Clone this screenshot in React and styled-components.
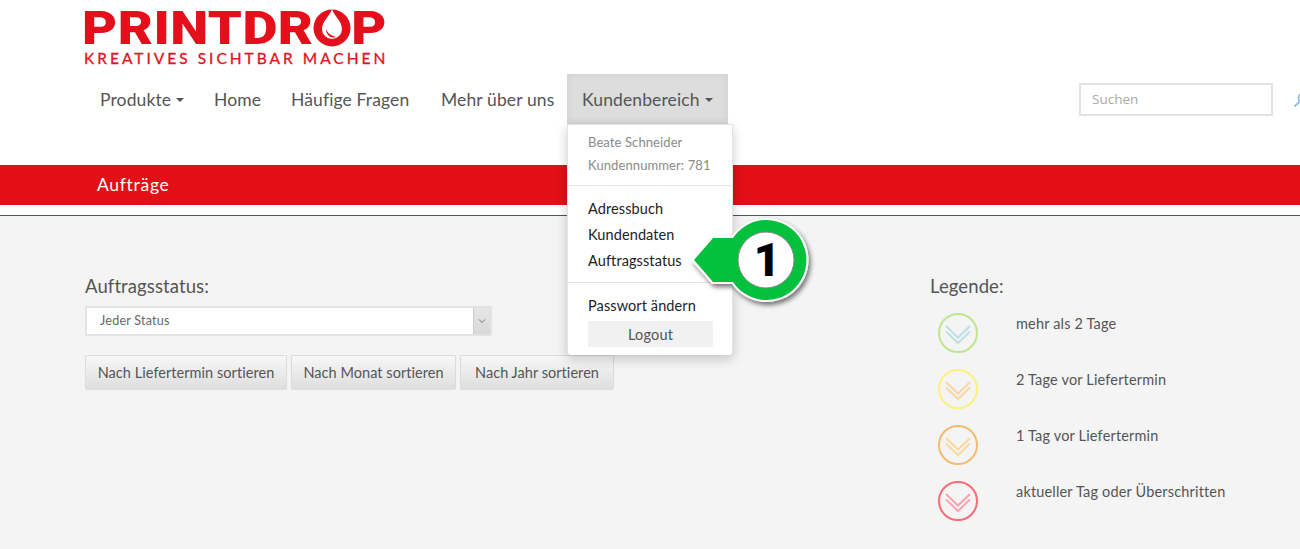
import React from 'react';
import styled, {createGlobalStyle} from 'styled-components';

const GlobalStyle = createGlobalStyle`
  html, body {
    margin: 0;
    padding: 0;
    background: #f4f4f4;
    overflow: hidden;
  }
  body {
    font-family: "Lato", "Open Sans", sans-serif;
    color: #555;
  }
`;

const Page = styled.div`
  position: relative;
  width: 1300px;
  height: 549px;
  overflow: hidden;
`;

const Header = styled.header`
  background: #fff;
  height: 165px;
  box-sizing: border-box;
  padding-top: 9px;
`;

const Logo = styled.div`
  position: relative;
  width: 302px;
  height: 65px;
  margin-left: 84px;
`;

const LogoName = styled.div`
  font-family: "Roboto", "Liberation Sans", sans-serif;
  font-weight: 900;
  font-size: 47px;
  line-height: 38px;
  height: 38px;
  margin-left: -2px;
  color: #e30f1b;
  letter-spacing: 0.4px;
  white-space: nowrap;
  transform-origin: left center;
  transform: scaleX(1.15);
`;

const LogoSlogan = styled.div`
  font-family: "Lato", sans-serif;
  font-weight: 400;
  font-size: 15.5px;
  line-height: 16px;
  margin-top: 3px;
  color: #e30f1b;
  letter-spacing: 3px;
  white-space: nowrap;
  -webkit-text-stroke: 0.3px #e30f1b;
`;

const LogoDrop = styled.svg`
  position: absolute;
  left: 229px;
  top: 0;
`;

const NavRow = styled.div`
  display: flex;
  align-items: flex-start;
  justify-content: space-between;
  padding-left: 85px;
`;

const Nav = styled.nav`
  display: flex;
`;

const NavItem = styled.div`
  position: relative;
  display: flex;
  align-items: center;
  gap: 5px;
  box-sizing: border-box;
  width: ${props => props.$width}px;
  height: 50px;
  padding: 0 15px;
  font-size: 17.5px;
  letter-spacing: 0.12px;
  color: #555;
  white-space: nowrap;
  background: ${props => props.$active ? '#ddd' : 'transparent'};
  box-shadow: ${props => props.$active ? 'inset 0 0 8px rgba(0,0,0,0.06)' : 'none'};
`;

const Caret = styled.span`
  width: 0;
  height: 0;
  border-top: 4px solid #555;
  border-left: 4px solid transparent;
  border-right: 4px solid transparent;
  margin-top: 2px;
`;

const Dropdown = styled.div`
  position: absolute;
  top: 50px;
  left: 0;
  width: 166px;
  height: 231px;
  box-sizing: border-box;
  background: #fff;
  border-radius: 0 0 4px 4px;
  box-shadow: 0 4px 12px rgba(0,0,0,0.2);
  border: 1px solid #e4e4e4;
  border-bottom: 0;
  padding: 6px 0 0 20px;
  z-index: 5;
`;

const InfoLine = styled.div`
  font-size: 13px;
  line-height: 23px;
  letter-spacing: 0.1px;
  color: #8a8a8a;
`;

const Divider = styled.div`
  height: 1px;
  background: #e5e5e5;
  margin: 8px 0 10px -20px;
`;

const MenuLink = styled.div`
  font-size: 14.5px;
  line-height: 26px;
  letter-spacing: 0.1px;
  color: #222;
`;

const LogoutButton = styled.div`
  width: 125px;
  height: 26px;
  margin-top: 2px;
  background: #f1f1f1;
  border-radius: 1px;
  font-size: 14.5px;
  line-height: 27px;
  letter-spacing: 0.2px;
  text-align: center;
  color: #555;
`;

const SearchBox = styled.div`
  display: flex;
  align-items: center;
  gap: 20px;
  margin-top: 9px;
  flex-shrink: 0;
  width: 221px;
`;

const SearchInput = styled.div`
  box-sizing: border-box;
  width: 194px;
  height: 33px;
  flex-shrink: 0;
  border: 2px solid #e2e2e2;
  background: #fff;
  padding-left: 11px;
  font-family: "Open Sans", sans-serif;
  font-size: 13.5px;
  line-height: 29px;
  color: #aaa;
`;

const RedBar = styled.div`
  height: 40px;
  background: #e30f17;
  padding-left: 97px;
  font-size: 17.5px;
  letter-spacing: 0.7px;
  line-height: 40px;
  color: #fff;
`;

const WhiteStrip = styled.div`
  height: 10px;
  background: #fff;
  border-bottom: 1px solid #4a5568;
`;

const Content = styled.main`
  display: grid;
  grid-template-columns: 845px 1fr;
  padding: 59px 0 0 85px;
  background: #f4f4f4;
`;

const Heading = styled.h2`
  margin: 0;
  font-size: 18.5px;
  font-weight: 400;
  line-height: 22px;
  letter-spacing: 0.1px;
  color: #555;
`;

const SelectBox = styled.div`
  display: flex;
  box-sizing: border-box;
  width: 407px;
  height: 30px;
  margin-top: 9px;
  background: #fff;
  border: 2px solid #e3e3e3;
  font-size: 12.5px;
  line-height: 26px;
  letter-spacing: 0.25px;
  color: #666;
`;

const SelectValue = styled.div`
  flex: 1;
  padding-left: 13px;
`;

const SelectArrow = styled.div`
  display: flex;
  align-items: center;
  justify-content: center;
  width: 16px;
  background: linear-gradient(#e6e6e6, #d8d8d8);
  border-left: 1px solid #ccc;
`;

const ButtonRow = styled.div`
  display: flex;
  gap: 4px;
  margin-top: 19px;
`;

const SortButton = styled.button`
  box-sizing: border-box;
  height: 34px;
  width: ${props => props.$width}px;
  padding: 0;
  font-family: inherit;
  font-size: 14.5px;
  letter-spacing: 0.05px;
  color: #555;
  background: linear-gradient(#f7f7f7, #dfdfdf);
  border: 1px solid #dcdcdc;
  border-radius: 1px;
  box-shadow: 0 1px 1px rgba(0,0,0,0.08);
`;

const LegendColumn = styled.section`
  display: flex;
  flex-direction: column;
`;

const LegendList = styled.div`
  display: flex;
  flex-direction: column;
  gap: 16px;
  margin-top: 16px;
  padding-left: 8px;
`;

const LegendRow = styled.div`
  display: grid;
  grid-template-columns: 78px 1fr;
  align-items: start;
  height: 40px;
  font-size: 14.5px;
  letter-spacing: 0.17px;
  line-height: 18px;
  color: #555;
`;

const LegendLabel = styled.span`
  padding-top: 2px;
`;

const Callout = styled.svg`
  position: absolute;
  left: 686px;
  top: 210px;
  z-index: 10;
`;

const CalloutNumber = styled.span`
  position: absolute;
  left: 743px;
  top: 232px;
  width: 48px;
  text-align: center;
  font-family: "Roboto", sans-serif;
  font-weight: 900;
  font-size: 46px;
  line-height: 56px;
  color: #000;
  z-index: 11;
`;

const legend = [
  {label: 'mehr als 2 Tage', ring: '#bfe58e', arrow: '#bfe0e2'},
  {label: '2 Tage vor Liefertermin', ring: '#fdf07c', arrow: '#fcd5a4'},
  {label: '1 Tag vor Liefertermin', ring: '#f5bb6e', arrow: '#fbd9a0'},
  {label: 'aktueller Tag oder Überschritten', ring: '#fb6b74', arrow: '#fda3b0'},
];

const StatusIcon = ({ring, arrow}) => (
  <svg width="40" height="40" viewBox="0 0 40 40" fill="none">
    <circle cx="20" cy="20" r="19" stroke={ring} strokeWidth="2" />
    <path d="M8 13 L20 24.5 L32 13 M8 18.5 L20 30 L32 18.5" stroke={arrow} strokeWidth="2" />
  </svg>
);

const App = () => (
  <Page>
    <GlobalStyle />
    <Header>
      <Logo>
        <LogoName>PRINTDROP</LogoName>
        <LogoSlogan>KREATIVES SICHTBAR MACHEN</LogoSlogan>
        <LogoDrop width="38" height="38" viewBox="0 0 38 38">
          <circle cx="19" cy="19" r="18.5" fill="#e30f1b" />
          <path d="M19 0 C21 7 29 12 29 20 A10 10 0 0 1 9 20 C9 12 17 7 19 0 Z" fill="#fff" />
          <path d="M13 20 C13 26 18 30 23 28 C19 27 15 25 13 20 Z" fill="#e30f1b" />
        </LogoDrop>
      </Logo>
      <NavRow>
        <Nav>
          <NavItem $width={114}>Produkte <Caret /></NavItem>
          <NavItem $width={77}>Home</NavItem>
          <NavItem $width={150}>Häufige Fragen</NavItem>
          <NavItem $width={141}>Mehr über uns</NavItem>
          <NavItem $width={161} $active>
            Kundenbereich <Caret />
            <Dropdown>
              <InfoLine>Beate Schneider</InfoLine>
              <InfoLine>Kundennummer: 781</InfoLine>
              <Divider />
              <MenuLink>Adressbuch</MenuLink>
              <MenuLink>Kundendaten</MenuLink>
              <MenuLink>Auftragsstatus</MenuLink>
              <Divider />
              <MenuLink>Passwort ändern</MenuLink>
              <LogoutButton>Logout</LogoutButton>
            </Dropdown>
          </NavItem>
        </Nav>
        <SearchBox>
          <SearchInput>Suchen</SearchInput>
          <svg width="16" height="16" viewBox="0 0 16 16" fill="none" stroke="#8fc4e4" strokeWidth="2" style={{flexShrink: 0}}>
            <circle cx="10" cy="6" r="4.5" />
            <path d="M6.5 9.5 L1.5 14.5" />
          </svg>
        </SearchBox>
      </NavRow>
    </Header>
    <RedBar>Aufträge</RedBar>
    <WhiteStrip />
    <Content>
      <div>
        <Heading>Auftragsstatus:</Heading>
        <SelectBox>
          <SelectValue>Jeder Status</SelectValue>
          <SelectArrow>
            <svg width="8" height="6" viewBox="0 0 8 6" fill="none" stroke="#777" strokeWidth="1">
              <path d="M1 1.5 L4 4.5 L7 1.5" />
            </svg>
          </SelectArrow>
        </SelectBox>
        <ButtonRow>
          <SortButton $width={202}>Nach Liefertermin sortieren</SortButton>
          <SortButton $width={165}>Nach Monat sortieren</SortButton>
          <SortButton $width={154}>Nach Jahr sortieren</SortButton>
        </ButtonRow>
      </div>
      <LegendColumn>
        <Heading>Legende:</Heading>
        <LegendList>
          {legend.map(item => (
            <LegendRow key={item.label}>
              <StatusIcon ring={item.ring} arrow={item.arrow} />
              <LegendLabel>{item.label}</LegendLabel>
            </LegendRow>
          ))}
        </LegendList>
      </LegendColumn>
    </Content>
    <Callout width="130" height="100" viewBox="0 0 130 100">
      <defs>
        <filter id="calloutShadow" x="-20%" y="-20%" width="140%" height="140%">
          <feDropShadow dx="2" dy="3" stdDeviation="2.5" floodColor="#000" floodOpacity="0.55" />
        </filter>
      </defs>
      <g filter="url(#calloutShadow)">
        <path d="M5 50 L26 26 L46 26 A42 42 0 1 1 46 74 L26 74 Z" fill="#fff" />
      </g>
      <path d="M8 50 L27 28 L47 28 A40 40 0 1 1 47 72 L27 72 Z" fill="#04c13d" />
      <circle cx="80" cy="50" r="28" fill="#fff" stroke="#888" strokeWidth="1" />
    </Callout>
    <CalloutNumber>1</CalloutNumber>
  </Page>
);

export default App;
